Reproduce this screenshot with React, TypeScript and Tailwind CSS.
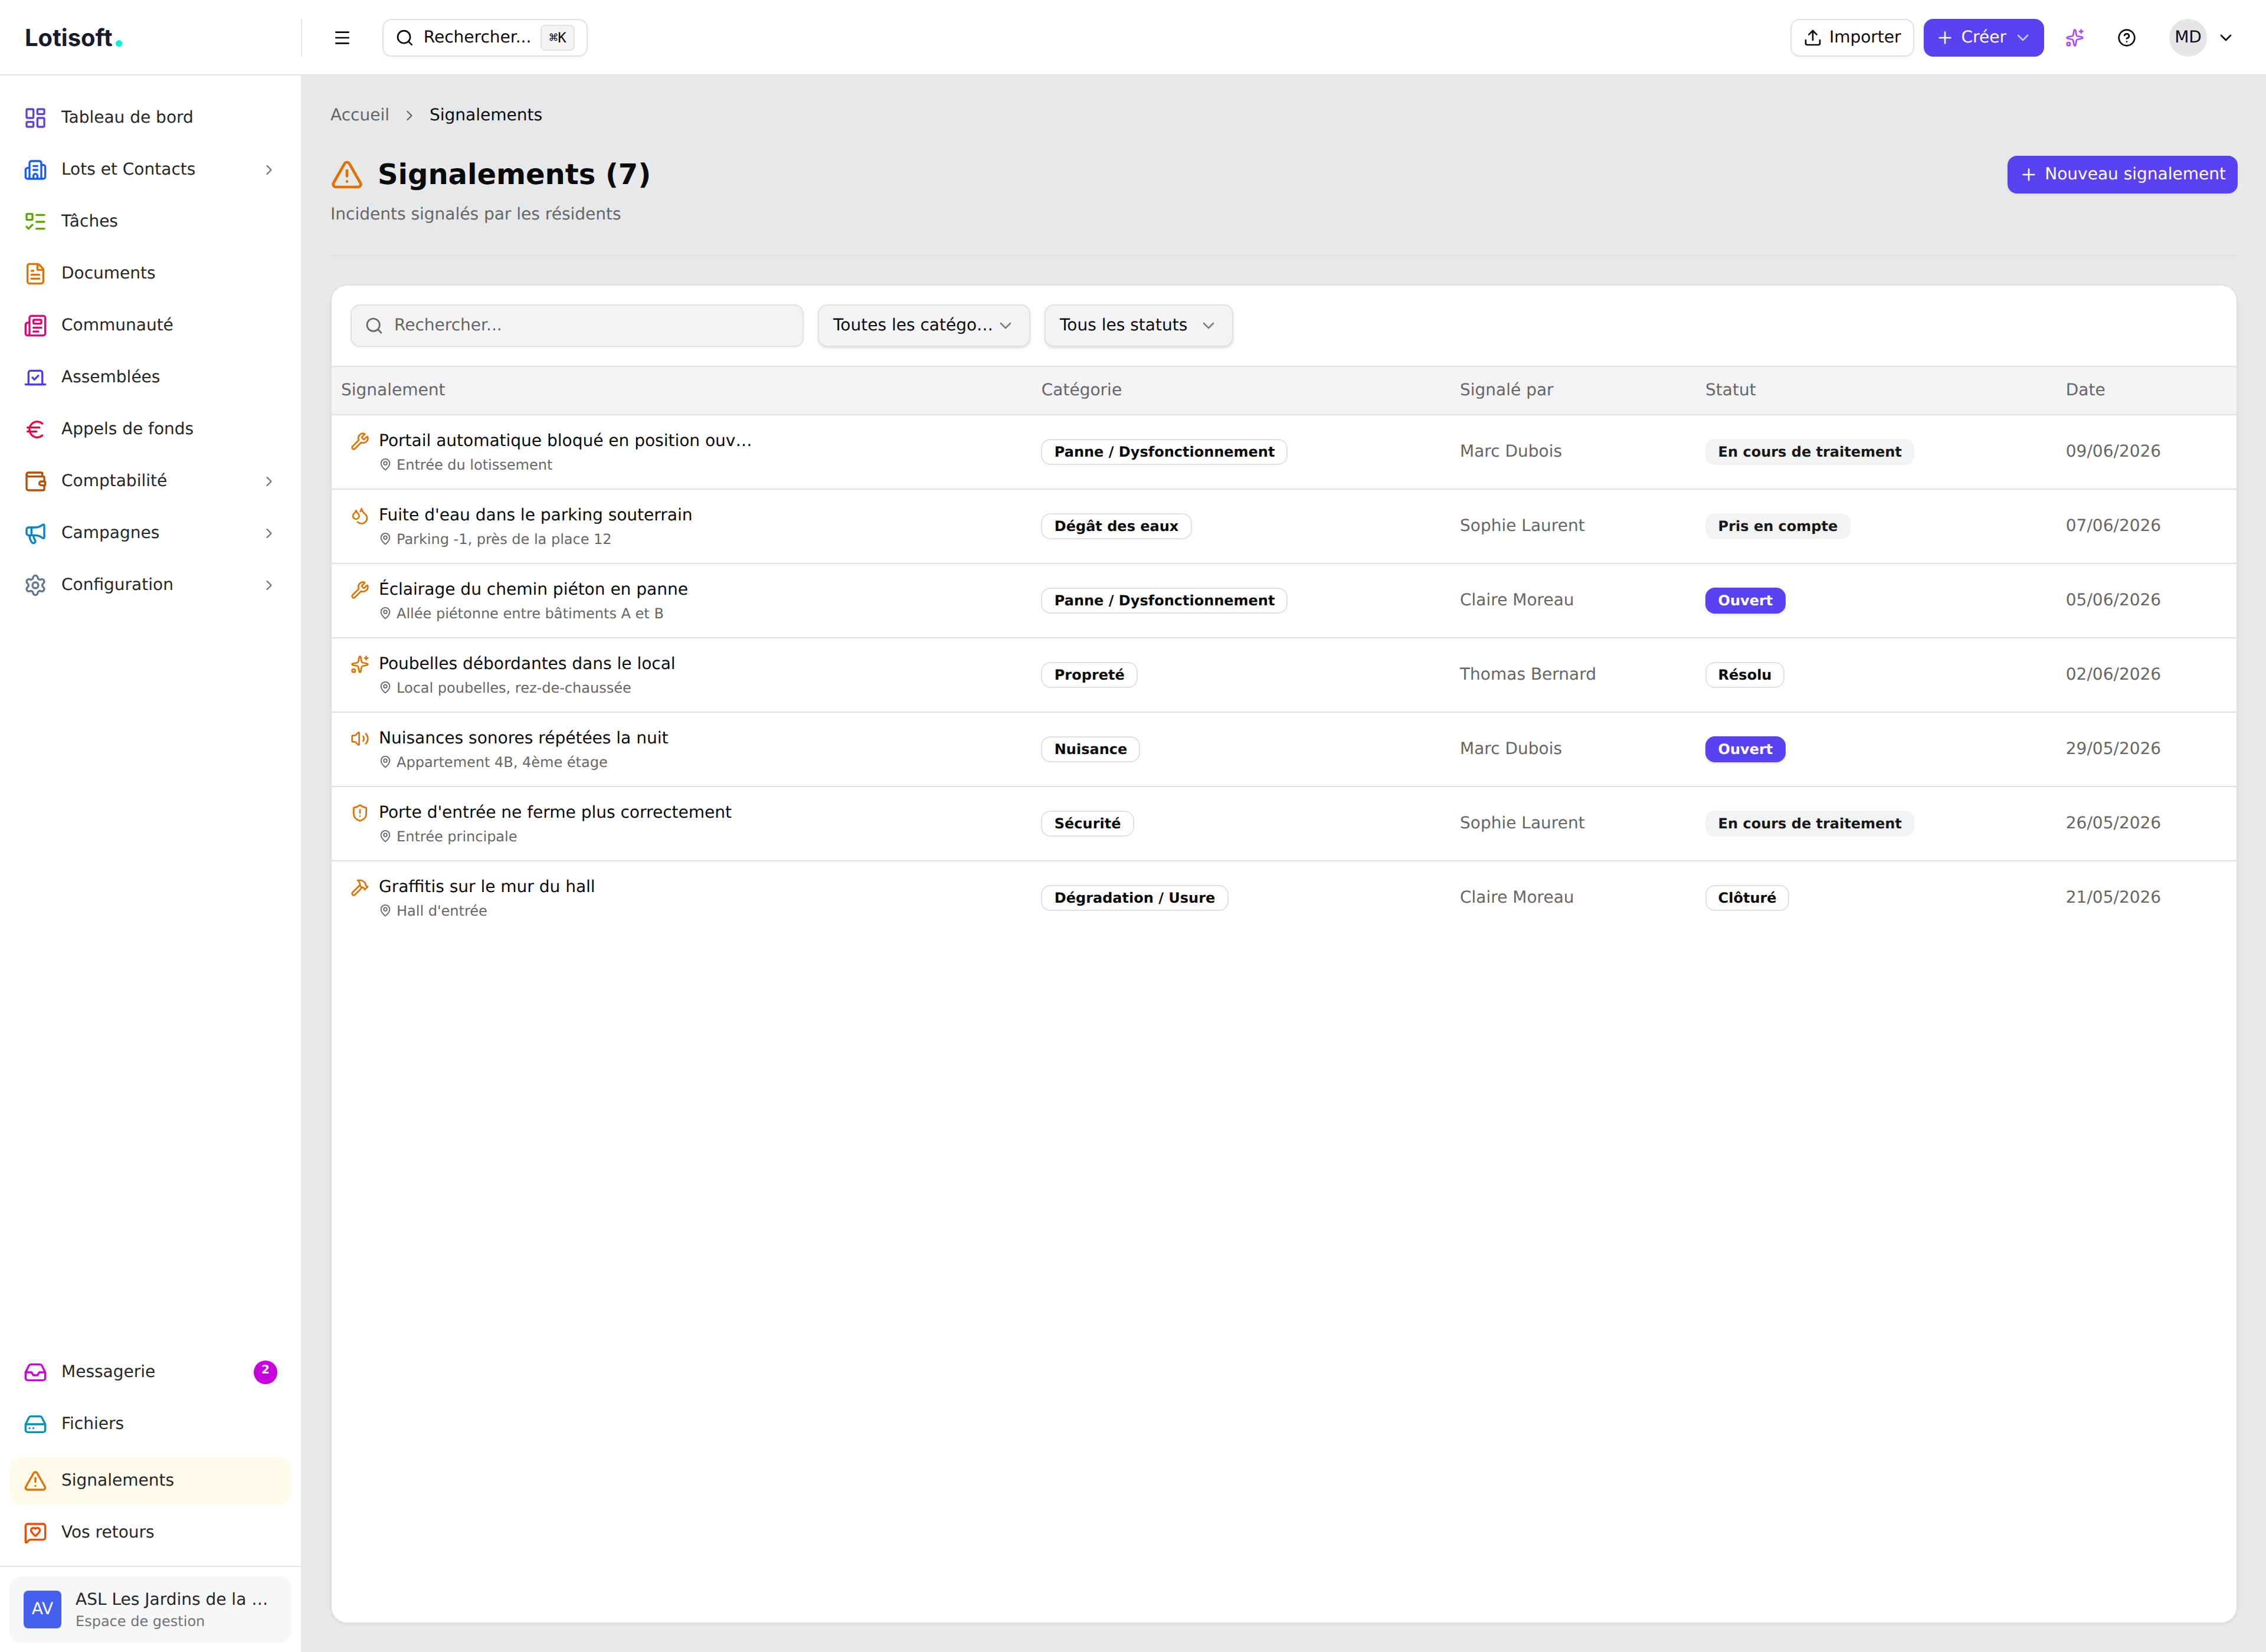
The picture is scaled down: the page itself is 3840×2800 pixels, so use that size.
import type { ReactNode } from "react";
import {
  Building2,
  ChevronDown,
  ChevronRight,
  CircleQuestionMark,
  Droplets,
  Euro,
  FileText,
  Hammer,
  HardDrive,
  Inbox,
  LayoutDashboard,
  ListTodo,
  MapPin,
  Megaphone,
  Menu,
  MessageSquareHeart,
  Newspaper,
  Plus,
  Search,
  Settings,
  ShieldAlert,
  Sparkles,
  TriangleAlert,
  Upload,
  Volume2,
  Vote,
  Wallet,
  Wrench,
  type LucideIcon,
} from "lucide-react";

type NavEntry = {
  label: string;
  icon: LucideIcon;
  color: string;
  expandable?: boolean;
  badge?: number;
  active?: boolean;
};

const mainNav: NavEntry[] = [
  { label: "Tableau de bord", icon: LayoutDashboard, color: "text-[#5b45e0]" },
  { label: "Lots et Contacts", icon: Building2, color: "text-blue-600", expandable: true },
  { label: "Tâches", icon: ListTodo, color: "text-lime-600" },
  { label: "Documents", icon: FileText, color: "text-amber-600" },
  { label: "Communauté", icon: Newspaper, color: "text-pink-600" },
  { label: "Assemblées", icon: Vote, color: "text-indigo-600" },
  { label: "Appels de fonds", icon: Euro, color: "text-rose-600" },
  { label: "Comptabilité", icon: Wallet, color: "text-amber-700", expandable: true },
  { label: "Campagnes", icon: Megaphone, color: "text-sky-600", expandable: true },
  { label: "Configuration", icon: Settings, color: "text-slate-500", expandable: true },
];

const toolsNav: NavEntry[] = [
  { label: "Messagerie", icon: Inbox, color: "text-fuchsia-600", badge: 2 },
  { label: "Fichiers", icon: HardDrive, color: "text-cyan-600" },
];

const supportNav: NavEntry[] = [
  { label: "Signalements", icon: TriangleAlert, color: "text-amber-600", active: true },
  { label: "Vos retours", icon: MessageSquareHeart, color: "text-orange-600" },
];

type BadgeVariant = "outline" | "secondary" | "primary";

type Report = {
  icon: LucideIcon;
  title: string;
  place: string;
  category: string;
  author: string;
  status: string;
  variant: BadgeVariant;
  date: string;
};

const reports: Report[] = [
  { icon: Wrench, title: "Portail automatique bloqué en position ouv…", place: "Entrée du lotissement", category: "Panne / Dysfonctionnement", author: "Marc Dubois", status: "En cours de traitement", variant: "secondary", date: "09/06/2026" },
  { icon: Droplets, title: "Fuite d'eau dans le parking souterrain", place: "Parking -1, près de la place 12", category: "Dégât des eaux", author: "Sophie Laurent", status: "Pris en compte", variant: "secondary", date: "07/06/2026" },
  { icon: Wrench, title: "Éclairage du chemin piéton en panne", place: "Allée piétonne entre bâtiments A et B", category: "Panne / Dysfonctionnement", author: "Claire Moreau", status: "Ouvert", variant: "primary", date: "05/06/2026" },
  { icon: Sparkles, title: "Poubelles débordantes dans le local", place: "Local poubelles, rez-de-chaussée", category: "Propreté", author: "Thomas Bernard", status: "Résolu", variant: "outline", date: "02/06/2026" },
  { icon: Volume2, title: "Nuisances sonores répétées la nuit", place: "Appartement 4B, 4ème étage", category: "Nuisance", author: "Marc Dubois", status: "Ouvert", variant: "primary", date: "29/05/2026" },
  { icon: ShieldAlert, title: "Porte d'entrée ne ferme plus correctement", place: "Entrée principale", category: "Sécurité", author: "Sophie Laurent", status: "En cours de traitement", variant: "secondary", date: "26/05/2026" },
  { icon: Hammer, title: "Graffitis sur le mur du hall", place: "Hall d'entrée", category: "Dégradation / Usure", author: "Claire Moreau", status: "Clôturé", variant: "outline", date: "21/05/2026" },
];

const badgeStyles: Record<BadgeVariant, string> = {
  outline: "border-[#dfe1e2] text-neutral-950",
  secondary: "border-transparent bg-[#f1f3f4] text-neutral-900",
  primary: "border-transparent bg-[#5a42f1] text-white shadow-sm",
};

function Badge({ variant, children }: { variant: BadgeVariant; children: ReactNode }) {
  return (
    <span className={`inline-flex items-center rounded-lg border px-2.5 py-0.5 text-xs font-bold whitespace-nowrap ${badgeStyles[variant]}`}>
      {children}
    </span>
  );
}

function NavItem({ entry }: { entry: NavEntry }) {
  const Icon = entry.icon;
  return (
    <a className={`flex h-10 items-center gap-3 rounded-[10px] px-3 text-sm ${entry.active ? "bg-amber-50" : ""}`}>
      <Icon className={`size-5 shrink-0 ${entry.color}`} />
      <span className="flex-1">{entry.label}</span>
      {entry.expandable && <ChevronRight className="size-3.5 text-neutral-500" />}
      {entry.badge && (
        <span className="flex size-5 items-center justify-center rounded-full bg-fuchsia-600 pb-[3px] text-[10px] leading-[15px] font-bold text-white">
          {entry.badge}
        </span>
      )}
    </a>
  );
}

function Header() {
  return (
    <header className="flex h-16 shrink-0 items-center bg-white shadow-[inset_0_-1px_0_#e2e4e5]">
      <div className="flex h-8 w-64 items-center border-r border-[#e2e4e5] pl-[21px]">
        <span className="flex items-baseline gap-[3px] font-['Inter',sans-serif] text-xl font-bold text-[#1a1a2e]">
          Lotisoft
          <svg viewBox="0 0 6 6" className="size-1.5 overflow-visible">
            <circle cx="2.8" cy="3.85" r="2.8" fill="#00f5d4" />
          </svg>
        </span>
      </div>
      <button className="ml-4 flex size-9 items-center justify-center">
        <Menu className="size-4" />
      </button>
      <button className="ml-4 flex h-8 w-[174px] items-center gap-2 rounded-lg border border-[#dfe1e2] px-2.5 text-sm shadow-xs">
        <Search className="size-4" />
        Rechercher...
        <kbd className="ml-auto flex h-[22px] w-[29px] items-center justify-center rounded-sm border border-[#dfe1e2] bg-[#f3f3f5] font-['DejaVu_Sans_Mono',monospace] text-xs">
          ⌘K
        </kbd>
      </button>
      <div className="ml-auto flex items-center gap-2 pr-4">
        <button className="flex h-8 items-center gap-1.5 rounded-lg border border-[#dfe1e2] px-2.5 text-sm shadow-xs">
          <Upload className="size-4" />
          Importer
        </button>
        <button className="flex h-8 items-center gap-1.5 rounded-lg bg-[#5a42f1] px-2.5 text-sm text-white shadow-xs">
          <Plus className="size-4" />
          Créer
          <ChevronDown className="size-4 opacity-70" />
        </button>
        <button className="flex size-9 items-center justify-center">
          <Sparkles className="size-4 text-purple-500" />
        </button>
        <button className="flex size-9 items-center justify-center">
          <CircleQuestionMark className="size-4" />
        </button>
        <button className="flex items-center gap-2 px-2.5 text-sm">
          <span className="flex size-8 items-center justify-center rounded-full bg-[#e6e6e6]">MD</span>
          <ChevronDown className="size-4" />
        </button>
      </div>
    </header>
  );
}

function Sidebar() {
  return (
    <aside className="flex w-64 shrink-0 flex-col border-r border-[#e2e4e5] bg-white text-neutral-800">
      <nav className="flex flex-1 flex-col gap-1 px-2 pt-4">
        {mainNav.map((entry) => (
          <NavItem key={entry.label} entry={entry} />
        ))}
      </nav>
      <nav className="flex flex-col gap-2 p-2">
        <div className="flex flex-col gap-1">
          {toolsNav.map((entry) => (
            <NavItem key={entry.label} entry={entry} />
          ))}
        </div>
        <div className="flex flex-col gap-1">
          {supportNav.map((entry) => (
            <NavItem key={entry.label} entry={entry} />
          ))}
        </div>
      </nav>
      <div className="border-t border-[#e2e4e5] p-2">
        <div className="flex h-14 items-center gap-3 rounded-[10px] bg-[#f6f7f9] px-3">
          <span className="flex size-8 shrink-0 items-center justify-center rounded-sm bg-[#4560ee] text-sm text-white">AV</span>
          <div className="min-w-0 whitespace-nowrap">
            <div className="text-sm">ASL Les Jardins de la …</div>
            <div className="text-xs text-neutral-500">Espace de gestion</div>
          </div>
        </div>
      </div>
    </aside>
  );
}

function FilterSelect({ label, className }: { label: string; className: string }) {
  return (
    <button className={`flex h-9 items-center justify-between rounded-lg border border-[#dfe1e2] bg-[#f3f3f5] px-3 text-sm whitespace-nowrap shadow-sm ${className}`}>
      {label}
      <ChevronDown className="size-4 opacity-50" />
    </button>
  );
}

function ReportsTable() {
  return (
    <table className="w-full table-fixed text-left text-sm">
      <colgroup>
        <col className="w-[593px]" />
        <col className="w-[355px]" />
        <col className="w-[208px]" />
        <col className="w-[305px]" />
        <col />
      </colgroup>
      <thead>
        <tr className="h-10 border-b border-[#dfe1e2] bg-[#f3f3f5] text-[#666666]">
          <th className="px-2 font-normal">Signalement</th>
          <th className="pl-[8.4px] font-normal">Catégorie</th>
          <th className="px-2 font-normal">Signalé par</th>
          <th className="px-2 font-normal">Statut</th>
          <th className="pl-[8.4px] font-normal">Date</th>
        </tr>
      </thead>
      <tbody>
        {reports.map((report) => {
          const Icon = report.icon;
          return (
            <tr key={report.title} className="border-b border-[#dfe1e2] last:border-b-0">
              <td className="px-4 py-3">
                <div className="flex items-start gap-2">
                  <Icon className="mt-0.5 size-4 shrink-0 text-amber-600" />
                  <div className="whitespace-nowrap">
                    <div>{report.title}</div>
                    <div className="mt-0.5 flex items-center gap-1 text-xs text-[#666666]">
                      <MapPin className="size-[11px]" />
                      {report.place}
                    </div>
                  </div>
                </div>
              </td>
              <td className="pl-[8.4px]">
                <div className="flex">
                  <Badge variant="outline">{report.category}</Badge>
                </div>
              </td>
              <td className="px-2 text-[#666666]">{report.author}</td>
              <td className="pl-[7.8px]">
                <div className="flex">
                  <Badge variant={report.variant}>{report.status}</Badge>
                </div>
              </td>
              <td className="pl-[8.4px] text-[#666666]">{report.date}</td>
            </tr>
          );
        })}
      </tbody>
    </table>
  );
}

export default function App() {
  return (
    <div className="h-[2800px] w-[3840px] overflow-hidden">
      <div className="flex h-[1400px] w-[1920px] origin-top-left scale-200 flex-col bg-[#e6e8e9] font-['DejaVu_Sans',sans-serif] text-neutral-950 [text-rendering:geometricPrecision] [&_button]:[text-rendering:inherit]">
        <Header />
        <div className="flex min-h-0 flex-1">
          <Sidebar />
          <main className="flex min-w-0 flex-1 flex-col px-6 pt-6 pb-6">
            <div className="flex h-5 items-center gap-2.5 text-sm">
              <span className="text-[#666666]">Accueil</span>
              <ChevronRight className="size-3.5 text-[#666666]" />
              <span>Signalements</span>
            </div>
            <div className="mt-6 flex items-start justify-between border-b border-[#dfe1e3] pb-6">
              <div>
                <div className="flex items-center gap-3">
                  <TriangleAlert className="size-7 text-amber-600" />
                  <h1 className="text-2xl font-bold">Signalements (7)</h1>
                </div>
                <p className="mt-2 text-sm text-[#666666]">Incidents signalés par les résidents</p>
              </div>
              <button className="flex h-8 items-center gap-1.5 rounded-lg bg-[#5a42f1] px-2.5 text-sm text-white shadow-xs">
                <Plus className="size-4" />
                Nouveau signalement
              </button>
            </div>
            <section className="mt-6 flex-1 overflow-hidden rounded-[14px] border border-[#dfe1e2] bg-white shadow-xs">
              <div className="flex gap-3 border-b border-[#dfe1e2] p-4">
                <div className="flex h-9 w-96 items-center gap-[9px] rounded-lg border border-[#dfe1e2] bg-[#f3f3f5] px-[11px] text-sm text-[#666666] shadow-xs">
                  <Search className="size-4" />
                  Rechercher...
                </div>
                <FilterSelect label="Toutes les catégo…" className="w-[180px]" />
                <FilterSelect label="Tous les statuts" className="w-40" />
              </div>
              <ReportsTable />
            </section>
          </main>
        </div>
      </div>
    </div>
  );
}
